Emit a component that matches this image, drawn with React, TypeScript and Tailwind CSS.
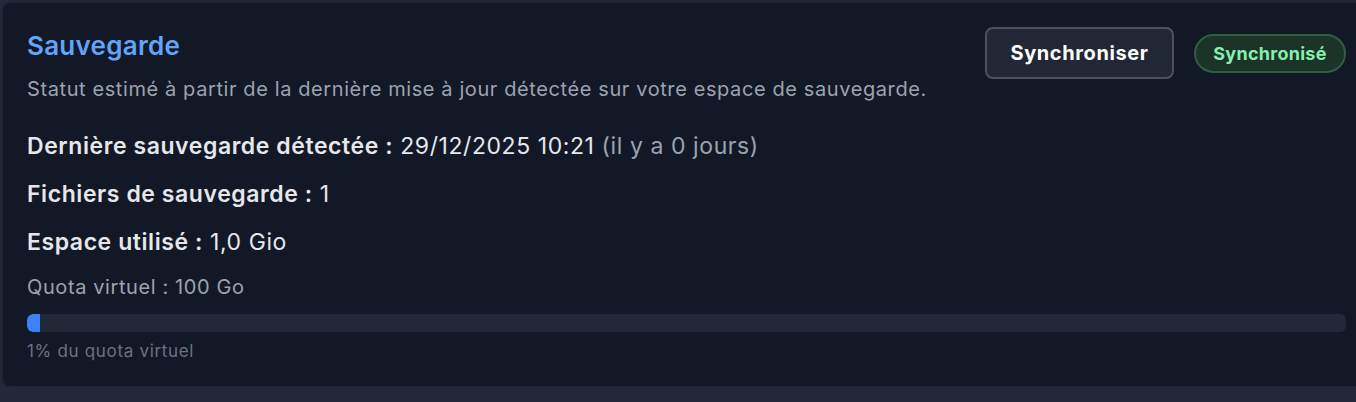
import React from "react";

const stats = [
  { label: "Dernière sauvegarde détectée :", value: "29/12/2025 10:21", note: "(il y a 0 jours)" },
  { label: "Fichiers de sauvegarde :", value: "1" },
  { label: "Espace utilisé :", value: "1,0 Gio" },
];

const BackupCard = () => {
  const percent = 1;
  return (
    <div className="rounded-l-lg border border-r-0 border-[#1d2331] bg-[#131826] pb-[25px] pl-6 pr-[10px] pt-6">
      <div className="flex items-start justify-between">
        <div className="flex flex-col">
          <h2 className="mt-[3px] text-[26px] font-semibold leading-8 tracking-[0.01em] text-[#60a5fa]">
            Sauvegarde
          </h2>
          <p className="mt-[13px] text-[20px] leading-7 tracking-[0.03em] text-[#9ca3af]">
            Statut estimé à partir de la dernière mise à jour détectée sur votre espace de sauvegarde.
          </p>
        </div>
        <div className="flex items-center gap-5">
          <button className="h-[52px] w-[189px] rounded-lg border-2 border-[#4b5161] bg-[#222736] text-[20px] font-bold tracking-[0.03em] text-white">
            Synchroniser
          </button>
          <span className="flex h-[39px] w-[152px] items-center justify-center rounded-full border-2 border-[#2c6140] bg-[#1c3329] text-[18px] font-bold tracking-[0.015em] text-[#86efac]">
            Synchronisé
          </span>
        </div>
      </div>

      <div className="mt-[29px] flex flex-col gap-5">
        {stats.map((s) => (
          <p key={s.label} className="text-[23px] leading-7 tracking-[0.025em] text-[#e5e7eb]">
            <span className="font-semibold">{s.label}</span> {s.value}
            {s.note && <span className="text-[#9ca3af]"> {s.note}</span>}
          </p>
        ))}
      </div>

      <p className="mt-[19px] text-[20px] leading-6 tracking-[0.03em] text-[#9ca3af]">Quota virtuel : 100 Go</p>

      <div className="mt-[15px] h-[18px] w-full overflow-hidden rounded-md bg-[#222837]">
        <div className="h-full rounded-l-md bg-[#3b82f6]" style={{ width: `${percent}%` }} />
      </div>

      <p className="mt-[9px] text-[17px] leading-5 tracking-[0.04em] text-[#6b7280]">{percent}% du quota virtuel</p>
    </div>
  );
};

export default function App() {
  return (
    <div
      className="min-h-screen bg-[#222837] pl-[2px] pt-[2px]"
      style={{ fontFamily: "Inter, 'Noto Sans', sans-serif" }}
    >
      <BackupCard />
    </div>
  );
}
